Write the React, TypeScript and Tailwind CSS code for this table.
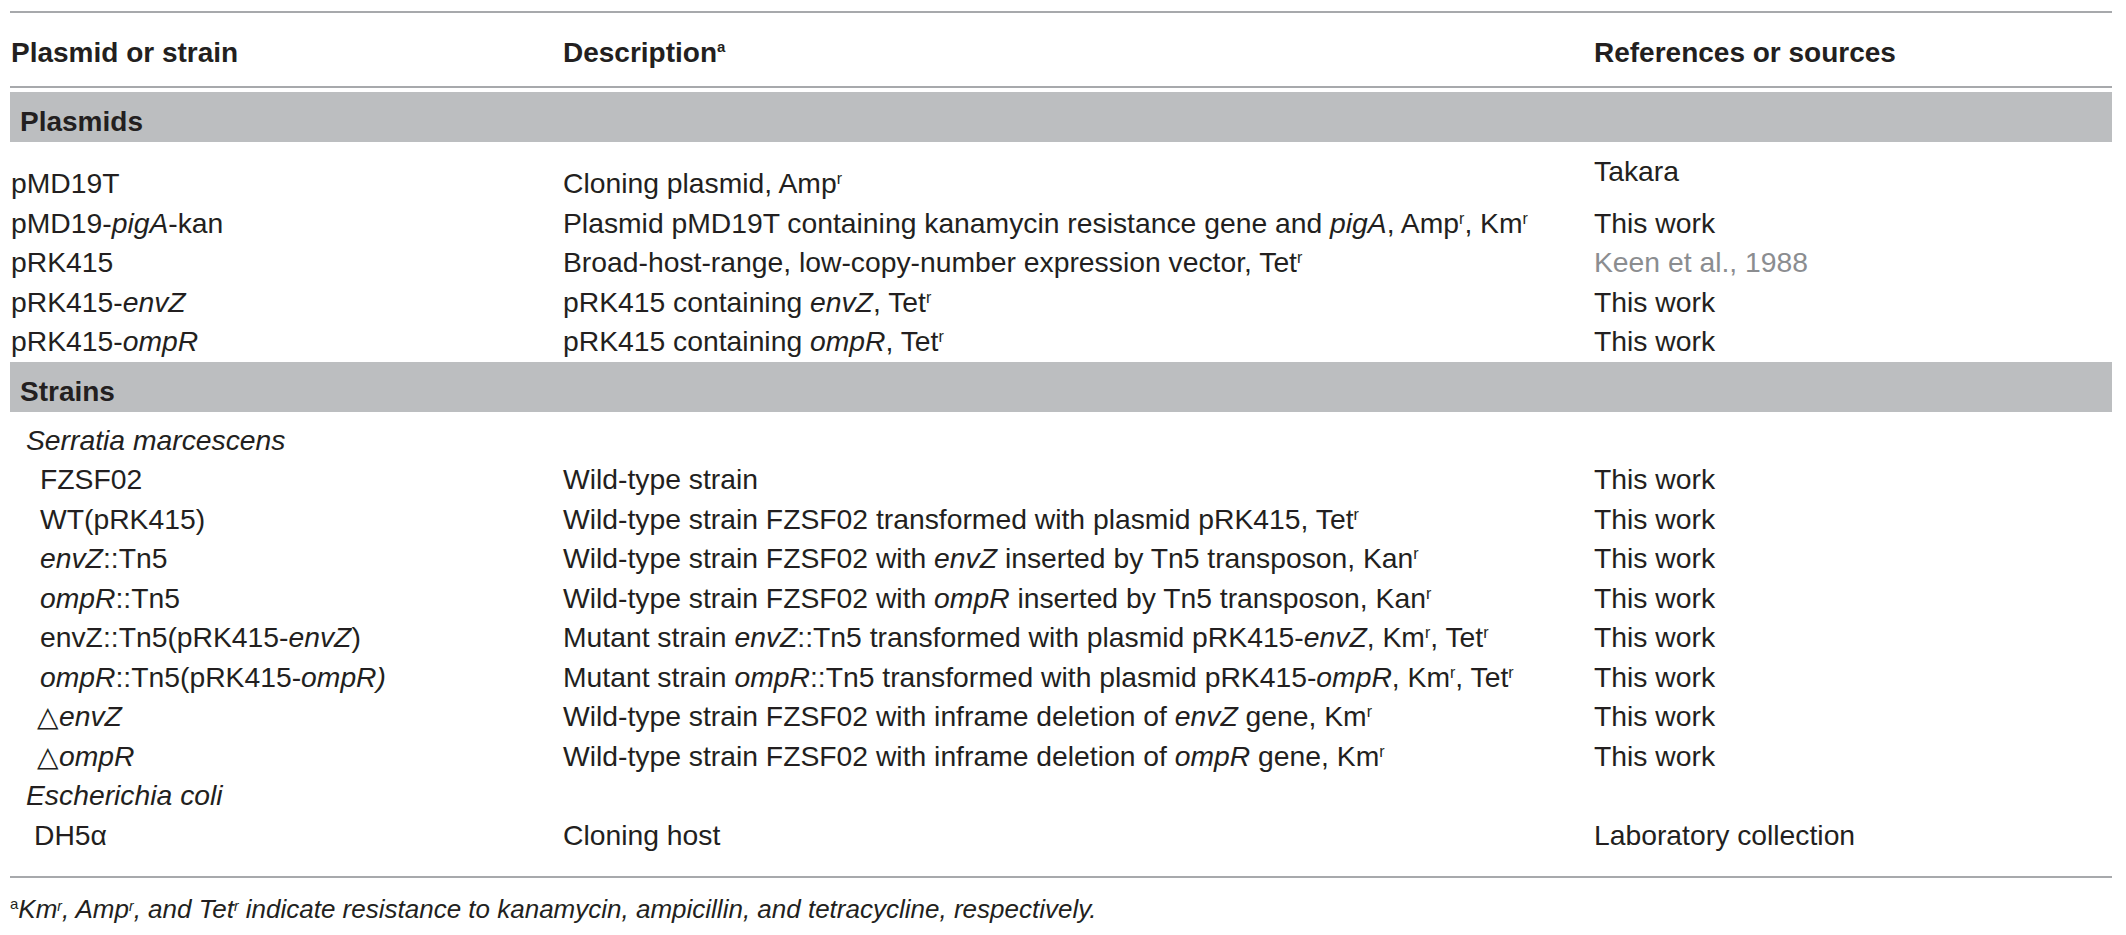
import React from "react";

type Row = {
  name: React.ReactNode;
  indent?: string;
  desc?: React.ReactNode;
  source?: React.ReactNode;
};

const R = () => <sup className="text-[16px] -top-[0.55em]">r</sup>;
const I = ({ children }: { children: React.ReactNode }) => <i>{children}</i>;

const plasmids: Row[] = [
  {
    name: "pMD19T",
    desc: (
      <>
        Cloning plasmid, Amp<R />
      </>
    ),
    source: <div className="-mt-[12px]">Takara</div>,
  },
  {
    name: (
      <>
        pMD19-<I>pigA</I>-kan
      </>
    ),
    desc: (
      <>
        Plasmid pMD19T containing kanamycin resistance gene and <I>pigA</I>, Amp<R />, Km<R />
      </>
    ),
    source: "This work",
  },
  {
    name: "pRK415",
    desc: (
      <>
        Broad-host-range, low-copy-number expression vector, Tet<R />
      </>
    ),
    source: <span className="text-[#8b8d90]">Keen et al., 1988</span>,
  },
  {
    name: (
      <>
        pRK415-<I>envZ</I>
      </>
    ),
    desc: (
      <>
        pRK415 containing <I>envZ</I>, Tet<R />
      </>
    ),
    source: "This work",
  },
  {
    name: (
      <>
        pRK415-<I>ompR</I>
      </>
    ),
    desc: (
      <>
        pRK415 containing <I>ompR</I>, Tet<R />
      </>
    ),
    source: "This work",
  },
];

const strains: Row[] = [
  { name: <I>Serratia marcescens</I>, indent: "pl-[16px]" },
  { name: "FZSF02", indent: "pl-[30px]", desc: "Wild-type strain", source: "This work" },
  {
    name: "WT(pRK415)",
    indent: "pl-[30px]",
    desc: (
      <>
        Wild-type strain FZSF02 transformed with plasmid pRK415, Tet<R />
      </>
    ),
    source: "This work",
  },
  {
    name: (
      <>
        <I>envZ</I>::Tn5
      </>
    ),
    indent: "pl-[30px]",
    desc: (
      <>
        Wild-type strain FZSF02 with <I>envZ</I> inserted by Tn5 transposon, Kan<R />
      </>
    ),
    source: "This work",
  },
  {
    name: (
      <>
        <I>ompR</I>::Tn5
      </>
    ),
    indent: "pl-[30px]",
    desc: (
      <>
        Wild-type strain FZSF02 with <I>ompR</I> inserted by Tn5 transposon, Kan<R />
      </>
    ),
    source: "This work",
  },
  {
    name: (
      <>
        envZ::Tn5(pRK415-<I>envZ</I>)
      </>
    ),
    indent: "pl-[30px]",
    desc: (
      <>
        Mutant strain <I>envZ</I>::Tn5 transformed with plasmid pRK415-<I>envZ</I>, Km<R />, Tet<R />
      </>
    ),
    source: "This work",
  },
  {
    name: (
      <>
        <I>ompR</I>::Tn5(pRK415-<I>ompR)</I>
      </>
    ),
    indent: "pl-[30px]",
    desc: (
      <>
        Mutant strain <I>ompR</I>::Tn5 transformed with plasmid pRK415-<I>ompR</I>, Km<R />, Tet<R />
      </>
    ),
    source: "This work",
  },
  {
    name: (
      <>
        △<I>envZ</I>
      </>
    ),
    indent: "pl-[27px]",
    desc: (
      <>
        Wild-type strain FZSF02 with inframe deletion of <I>envZ</I> gene, Km<R />
      </>
    ),
    source: "This work",
  },
  {
    name: (
      <>
        △<I>ompR</I>
      </>
    ),
    indent: "pl-[27px]",
    desc: (
      <>
        Wild-type strain FZSF02 with inframe deletion of <I>ompR</I> gene, Km<R />
      </>
    ),
    source: "This work",
  },
  { name: <I>Escherichia coli</I>, indent: "pl-[16px]" },
  { name: "DH5α", indent: "pl-[24px]", desc: "Cloning host", source: "Laboratory collection" },
];

const cols = "grid grid-cols-[553px_1031px_1fr]";

const TableRow = ({ row }: { row: Row }) => (
  <div className={`${cols} leading-[39.5px] whitespace-nowrap`}>
    <div className={row.indent ?? "pl-[1px]"}>{row.name}</div>
    <div>{row.desc}</div>
    <div>{row.source}</div>
  </div>
);

const SectionBand = ({ label }: { label: string }) => (
  <div className="bg-[#bcbec0] h-[50px] pt-[14px] pl-[10px] font-bold leading-[32px] text-[28px]">
    {label}
  </div>
);

export default function App() {
  return (
    <div
      className="w-[2126px] h-[935px] bg-white text-[#231f20] pl-[10px] pt-[11px]"
      style={{ fontFamily: '"Liberation Sans", Arial, sans-serif' }}
    >
      <div className="w-[2102px]">
        <div className="border-t-2 border-[#a7a9ac]" />

        {/* Header */}
        <div className={`${cols} h-[73px] pt-[24px] font-bold text-[28px] leading-[32px]`}>
          <div className="pl-[1px]">Plasmid or strain</div>
          <div>
            Description<sup className="text-[15px] -top-[0.7em]">a</sup>
          </div>
          <div>References or sources</div>
        </div>
        <div className="border-t-2 border-[#a7a9ac] mb-[4px]" />

        {/* Plasmids */}
        <SectionBand label="Plasmids" />
        <div className="pt-[22px] text-[28.3px]">
          {plasmids.map((r, i) => (
            <TableRow key={i} row={r} />
          ))}
        </div>

        {/* Strains */}
        <SectionBand label="Strains" />
        <div className="pt-[9px] pb-[21px] text-[28.3px]">
          {strains.map((r, i) => (
            <TableRow key={i} row={r} />
          ))}
        </div>
        <div className="border-t-2 border-[#a7a9ac]" />

        <p className="mt-[17px] italic text-[26px] leading-[28px] whitespace-nowrap">
          <sup className="text-[15px] not-italic -top-[0.6em]">a</sup>Km<sup className="text-[14px]">r</sup>, Amp
          <sup className="text-[14px]">r</sup>, and Tet<sup className="text-[14px]">r</sup> indicate resistance to
          kanamycin, ampicillin, and tetracycline, respectively.
        </p>
      </div>
    </div>
  );
}
